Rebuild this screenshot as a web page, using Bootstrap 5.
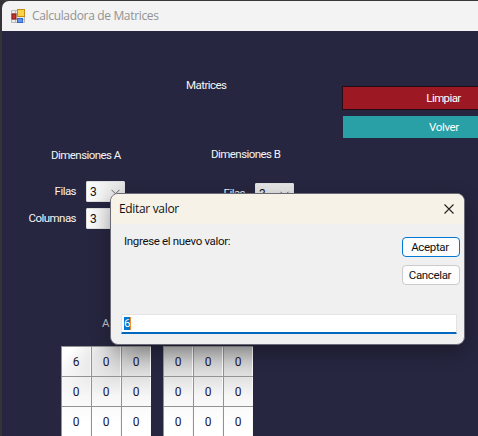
<!DOCTYPE html>
<html lang="es">
<head>
<meta charset="utf-8">
<meta name="viewport" content="width=device-width, initial-scale=1">
<title>Calculadora de Matrices</title>
<link href="https://cdn.jsdelivr.net/npm/bootstrap@5.3.0/dist/css/bootstrap.min.css" rel="stylesheet">
<style>
body{width:478px;height:436px;background:#25253e;font-family:Roboto,"Liberation Sans",sans-serif;font-size:11.5px;line-height:14px;color:#f4f4f4;letter-spacing:-.55px}
.app-window{height:436px;border-top:1px solid #39383b;border-left:2px solid #343338;background:#262640}
.app-title{height:30px;background:#f3f3f3;color:#929292;font-family:"Open Sans","Noto Sans",sans-serif;font-size:12px;padding-left:9px;gap:7px;border-top-left-radius:7px;letter-spacing:-.34px}
.title-back{background:#343338}
.heading-area{height:107px}
.heading-text{width:340px;padding:47px 0 0 184px}
.action-area{width:138px;padding-top:55px}
.action{height:24px;border:1px solid #260a14;border-radius:0;background:#9c1822;color:#fff;font:inherit;letter-spacing:-.6px;padding:0;width:203px;flex:none}
.action-back{height:22px;background:#28a0a6;margin:6px 0 0 1px;width:202px;border:0;letter-spacing:-.35px}
.dims{height:208px}
.dim-a{width:160px}
.dim-b{width:160px}
.dim-a .dim-title{margin:10px 0 0 49px}
.dim-b .dim-title{margin:9px 0 0 49px}
.field-row{height:21px;gap:10px;margin-top:19px}
.dim-b .field-row{margin-top:22px;margin-left:9px}
.field-row + .field-row{margin-top:6px}
.field-label{width:74px;text-align:right;padding-bottom:1px}
.dim-b .field-label{padding-bottom:2px}
.combo{width:39px;height:21px;background:linear-gradient(90deg,#fbfbfb,#e4e4e4);color:#111;border-radius:1px;padding:0 4px 0 3px;border:1px solid #dedede;font-size:12px}
.dim-b .combo{background:#e5e5e5}
.matrix-name{margin:87px 0 0 100px;color:#c9c9ce}
.matrices{gap:12px;padding-left:59px}
.matrix{display:grid;grid-template-columns:repeat(3,30px);grid-auto-rows:30px;background:linear-gradient(#bdbdbd,#dedede 28px,#f6f6f6 50px,#fff 75px);color:#1c1630;font-size:12px;letter-spacing:0}
.matrix-a{background:linear-gradient(135deg,#fff 10px,transparent 60px),linear-gradient(#bababa,#dedede 28px,#f6f6f6 50px,#fff 75px)}
.cell{border-top:1px solid #939393;border-left:1px solid #939393;box-shadow:inset -1px 0 #f7f7f7;padding-right:1px;padding-top:1px}
.dialog-window{position:absolute;left:110px;top:193px;width:355px;height:152px;border:1px solid #6b6975;border-radius:8px;background:#f0f0f0;color:#111;box-shadow:0 7px 20px rgba(0,0,0,.32);overflow:hidden;letter-spacing:-.33px}
.dialog-title{height:30px;background:#f7f2e8;padding:0 10px 0 8px;font-family:"Open Sans","Noto Sans",sans-serif;font-size:12px}
.prompt-row{height:90px;padding:13px 4px 0 13px}
.prompt-label{line-height:8px}
.dlg-btn{width:58px;height:20px;border:1px solid #cbcbcb;border-radius:4px;background:#fdfdfd;color:#111;font:inherit;letter-spacing:-.35px;line-height:18px;padding:0 2px 0 0}
.dlg-default{border-color:#0078d4}
.value-box{height:20px;margin:0 7px 0 10px;padding-left:2px;background:#fff;border:1px solid #e3e3e3;border-bottom:2px solid #0067c0;border-radius:1px}
.selected{height:13px;line-height:13px;background:#0078d7;color:#fff;border-right:1px solid #f28c28;width:7px}
</style>
<script src="https://cdn.jsdelivr.net/npm/bootstrap@5.3.0/dist/js/bootstrap.bundle.min.js"></script>
</head>
<body class="overflow-hidden position-relative">
<main class="app-window overflow-hidden">
  <div class="title-back">
    <header class="app-title d-flex align-items-center">
      <svg width="14" height="14" viewBox="0 0 14 14"><path d="M.5 1.500h13v12H.5zM.5 4.500h13M4.500 1.500v12M.5 10.500h13" fill="#ececec" stroke="#b9b9b9"/><rect x="1" y="5" width="4" height="5" fill="#c5342a" stroke="#8a1712"/><rect x="6.5" y=".5" width="7" height="7" fill="#fbd34b" stroke="#c58d13"/><rect x="6.5" y="9.5" width="5" height="4" fill="#5e95ee" stroke="#3567c4"/></svg>
      <span>Calculadora de Matrices</span>
    </header>
  </div>
  <section class="heading-area d-flex">
    <div class="heading-text flex-shrink-0">Matrices</div>
    <div class="action-area d-flex flex-column flex-shrink-0"><button class="btn action">Limpiar</button><button class="btn action action-back">Volver</button></div>
  </section>
  <section class="dims d-flex">
    <div class="dim-a">
      <div class="dim-title">Dimensiones A</div>
      <div class="field-row d-flex align-items-center"><span class="field-label">Filas</span><div class="combo d-flex align-items-center justify-content-between"><span>3</span><svg width="9" height="6" viewBox="0 0 9 6" fill="none" stroke="#666"><path d="M.5.8l4 4 4-4"/></svg></div></div>
      <div class="field-row d-flex align-items-center"><span class="field-label">Columnas</span><div class="combo d-flex align-items-center"><span>3</span></div></div>
      <div class="matrix-name">A</div>
    </div>
    <div class="dim-b">
      <div class="dim-title">Dimensiones B</div>
      <div class="field-row d-flex align-items-center"><span class="field-label">Filas</span><div class="combo d-flex align-items-center justify-content-between"><span>3</span><svg width="9" height="6" viewBox="0 0 9 6" fill="none" stroke="#666"><path d="M.5.8l4 4 4-4"/></svg></div></div>
    </div>
  </section>
  <section class="matrices d-flex">
    <div class="matrix matrix-a">
      <div class="cell d-flex align-items-center justify-content-center">6</div><div class="cell d-flex align-items-center justify-content-center">0</div><div class="cell d-flex align-items-center justify-content-center">0</div>
      <div class="cell d-flex align-items-center justify-content-center">0</div><div class="cell d-flex align-items-center justify-content-center">0</div><div class="cell d-flex align-items-center justify-content-center">0</div>
      <div class="cell d-flex align-items-center justify-content-center">0</div><div class="cell d-flex align-items-center justify-content-center">0</div><div class="cell d-flex align-items-center justify-content-center">0</div>
    </div>
    <div class="matrix">
      <div class="cell d-flex align-items-center justify-content-center">0</div><div class="cell d-flex align-items-center justify-content-center">0</div><div class="cell d-flex align-items-center justify-content-center">0</div>
      <div class="cell d-flex align-items-center justify-content-center">0</div><div class="cell d-flex align-items-center justify-content-center">0</div><div class="cell d-flex align-items-center justify-content-center">0</div>
      <div class="cell d-flex align-items-center justify-content-center">0</div><div class="cell d-flex align-items-center justify-content-center">0</div><div class="cell d-flex align-items-center justify-content-center">0</div>
    </div>
  </section>
</main>
<div class="dialog-window" role="dialog" aria-label="Editar valor">
  <div class="dialog-title d-flex align-items-center justify-content-between"><span>Editar valor</span><svg width="10" height="10" viewBox="0 0 10 10" fill="none" stroke="#222" stroke-width="1.1"><path d="M.5.5l9 9M9.500.5l-9 9"/></svg></div>
  <div class="prompt-row d-flex justify-content-between">
    <div class="prompt-label">Ingrese el nuevo valor:</div>
    <div class="d-flex flex-column gap-2"><button class="btn dlg-btn dlg-default">Aceptar</button><button class="btn dlg-btn">Cancelar</button></div>
  </div>
  <div class="value-box d-flex align-items-center"><span class="selected">6</span></div>
</div>
</body>
</html>
